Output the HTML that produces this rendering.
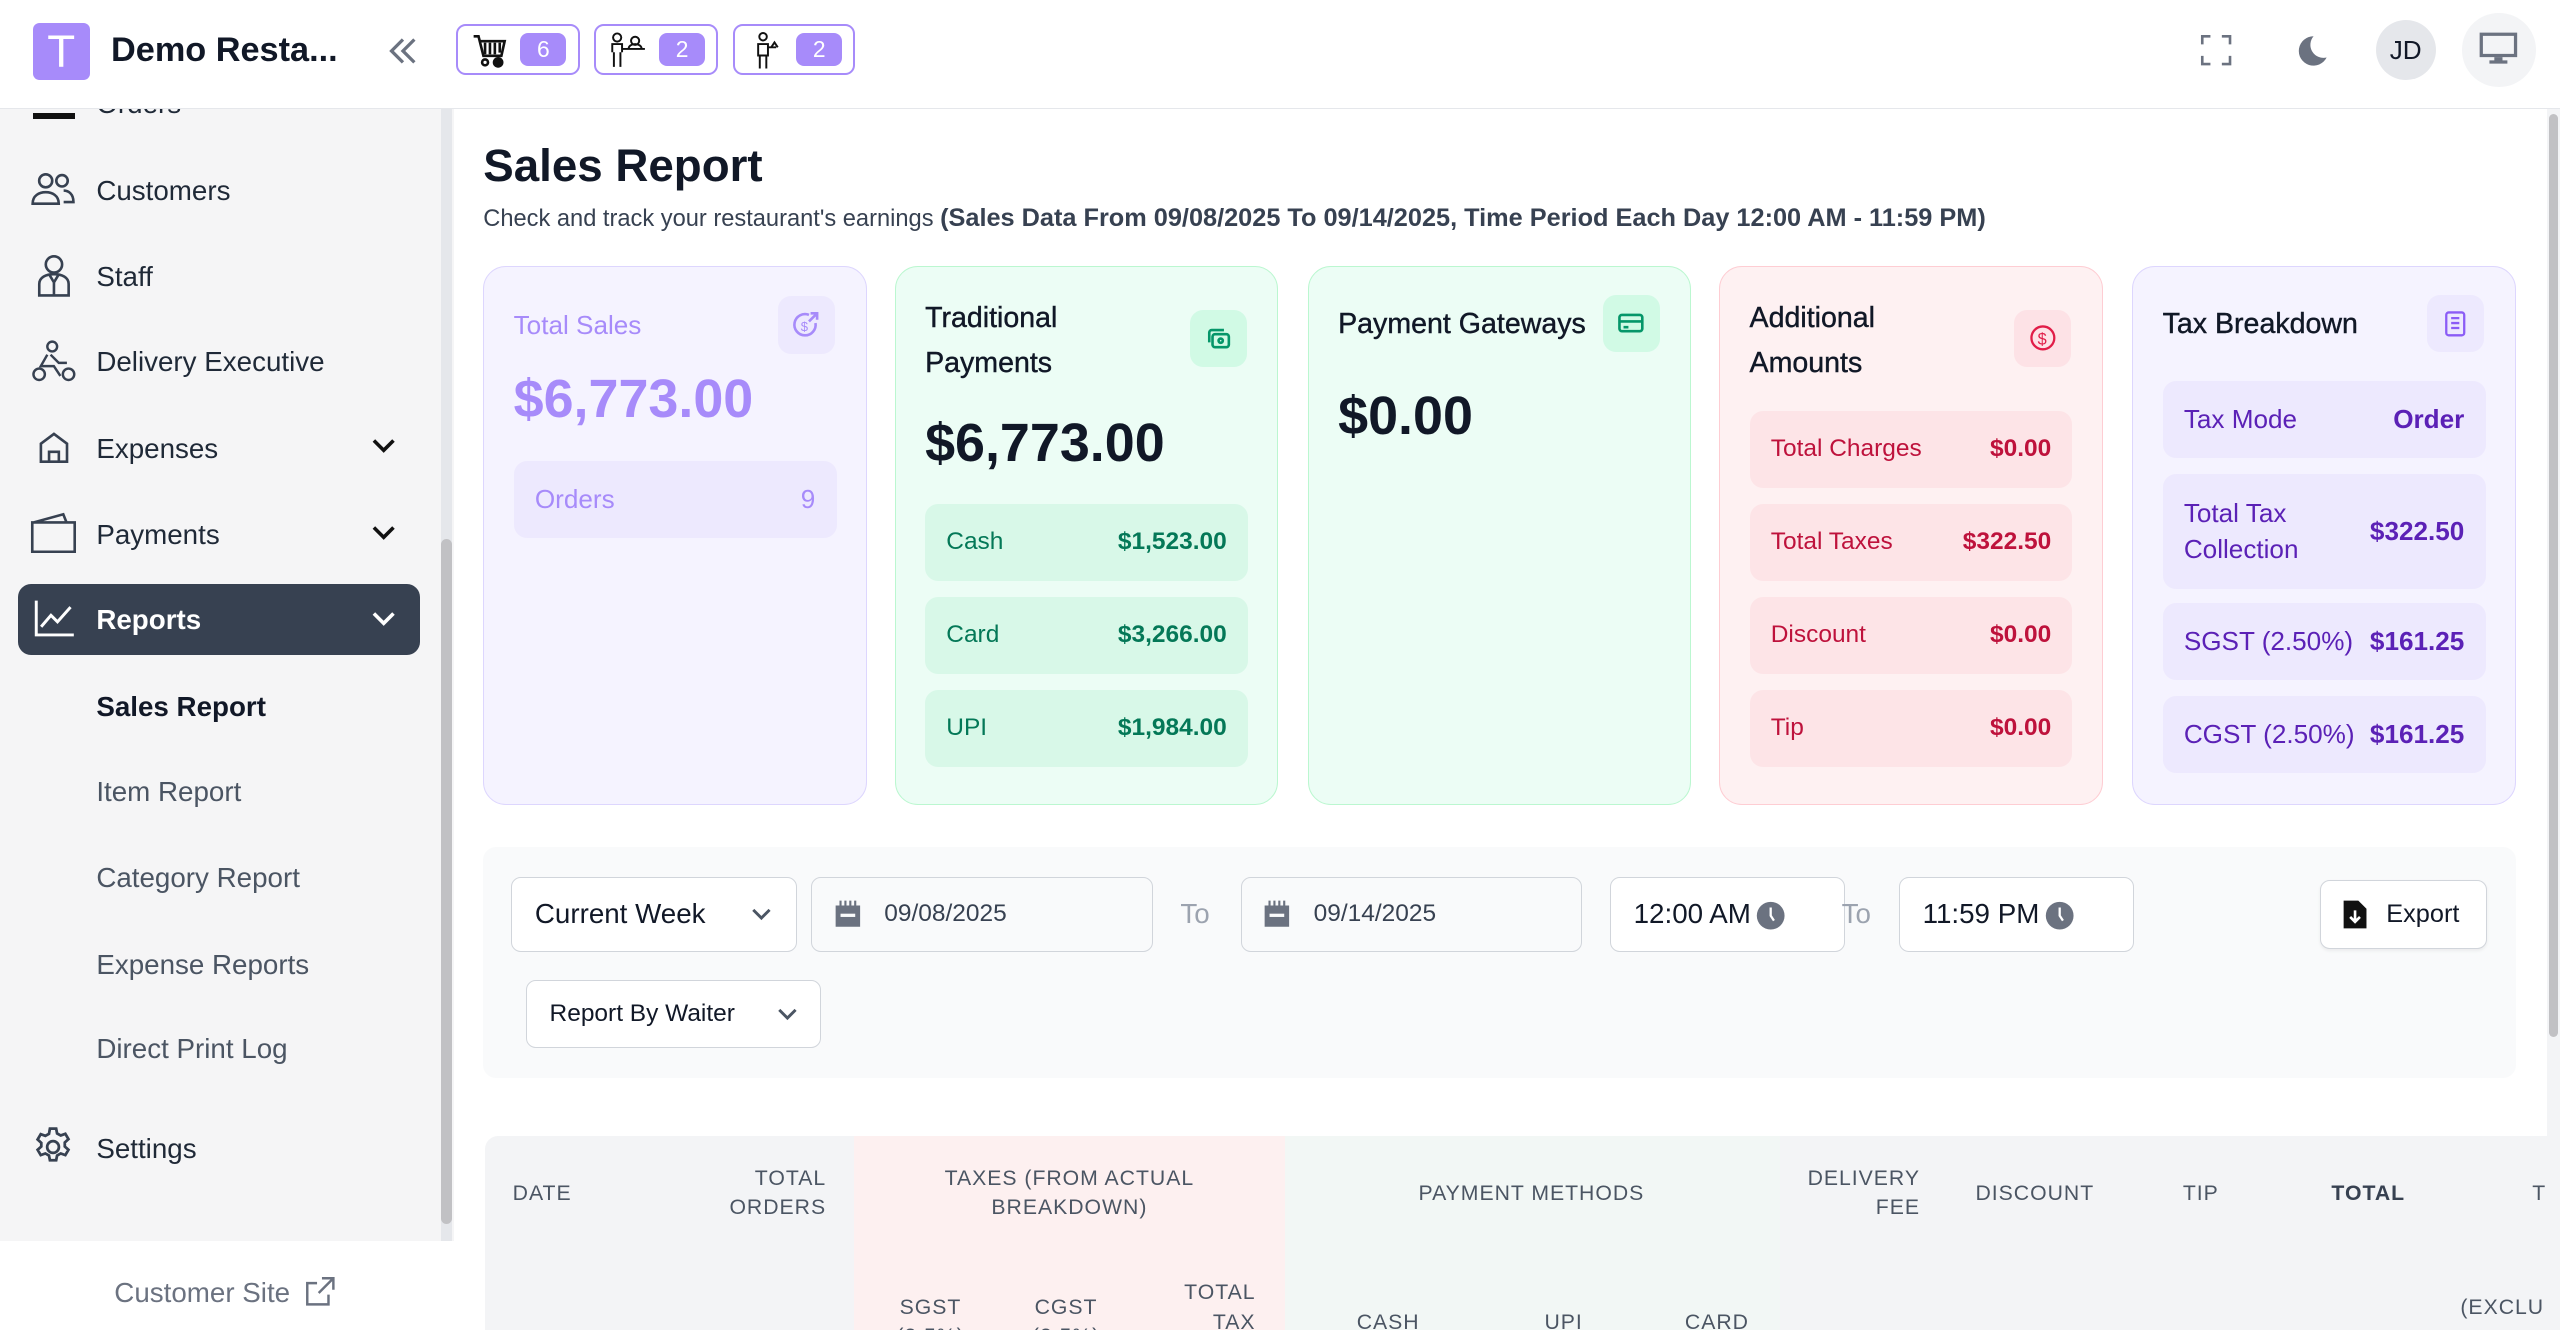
<!DOCTYPE html>
<html><head><meta charset="utf-8"><style>
*{box-sizing:border-box;margin:0;padding:0}
html,body{width:2560px;height:1330px;overflow:hidden;background:#fff}
#r{position:relative;width:1568px;height:815px;zoom:1.63265;font-family:"Liberation Sans",sans-serif;color:#111827;overflow:hidden}
.a{position:absolute}
.hb{position:absolute;top:15px;height:31px;border:1.5px solid #a78bfa;border-radius:6px;z-index:6}
.bd{position:absolute;top:4px;right:7px;width:28px;height:20px;background:#a78bfa;color:#fff;border-radius:5px;font-size:14px;text-align:center;line-height:20px}
.nav{position:absolute;left:59px;font-size:17px;color:#1f2937}
.sub{position:absolute;left:59px;font-size:17px;color:#4b5563}
.card{position:absolute;top:163px;height:330px;width:235px;border-radius:14px;border:1px solid}
.row{position:absolute;left:18px;right:18px;height:47px;border-radius:8px;font-size:15px;display:flex;justify-content:space-between;align-items:center;padding:0 13px}
.ic{position:absolute;width:35px;height:35px;border-radius:8px}
.inp{position:absolute;top:537px;height:46px;border:1px solid #d1d5db;border-radius:6px;background:#fff;font-size:17px;display:flex;align-items:center}
.th{position:absolute;font-size:13px;color:#4b5563;letter-spacing:.6px;text-align:center;line-height:18px}
.z{z-index:6}
.ct{font-size:17.5px;color:#111827;-webkit-text-stroke:0.25px #111827}
</style></head><body><div id="r">
<!-- sidebar -->
<div class="a" style="left:0;top:50px;width:278px;height:710px;background:#f5f5f6"></div>
<div class="a" style="left:270px;top:67px;width:7px;height:693px;background:#e5e7eb"></div>
<div class="a" style="left:270px;top:330px;width:7px;height:420px;background:#c1c1c4;border-radius:4px"></div>
<div class="a" style="left:0;top:760px;width:278px;height:55px;background:#fff"></div>
<div class="a" style="left:20px;top:58px;width:26px;height:15px;border-bottom:4px solid #111;border-top:3px solid #111"></div>
<div class="nav" style="top:54px">Orders</div>
<!-- header -->
<div class="a z" style="left:0;top:0;width:1568px;height:67px;border-bottom:1px solid #e5e7eb;background:#fff"></div>
<div class="a z" style="left:20px;top:14px;width:35px;height:35px;background:#a78bfa;border-radius:4px;color:#fff;font-size:28px;text-align:center;line-height:35px">T</div>
<div class="a z" style="left:68px;top:19px;font-size:21px;font-weight:bold">Demo Resta...</div>
<svg class="a z" style="left:236px;top:20px" width="22" height="22" viewBox="0 0 22 22" fill="none" stroke="#6b7280" stroke-width="2"><path d="M11 4 4 11l7 7M18 4l-7 7 7 7"/></svg>
<div class="hb" style="left:279px;width:76px"><svg class="a" style="left:9px;top:4px" width="22" height="22" viewBox="0 0 22 22" fill="none" stroke="#111" stroke-width="1.6"><path d="M1 2h3l3 12h11l2-9H5"/><path d="M8 6v7M11 6v7M14 6v7M17 6v6"/><circle cx="8" cy="18" r="1.8"/><circle cx="16" cy="18" r="2.5" fill="#111"/></svg><div class="bd">6</div></div>
<div class="hb" style="left:364px;width:76px"><svg class="a" style="left:8px;top:3px" width="24" height="24" viewBox="0 0 24 24" fill="none" stroke="#111" stroke-width="1.2"><circle cx="5" cy="4" r="2.5"/><path d="M2 13V8h6v5M3 13v9M7 13v9M8 11h14"/><circle cx="16" cy="6" r="2.5"/><path d="M12 11c0-2 2-3 4-3s4 1 4 3"/></svg><div class="bd">2</div></div>
<div class="hb" style="left:449px;width:75px"><svg class="a" style="left:9px;top:3px" width="22" height="24" viewBox="0 0 22 24" fill="none" stroke="#111" stroke-width="1.2"><circle cx="8" cy="3.5" r="2.3"/><path d="M5 8h6v7H5zM6 15v8M10 15v8M11 10h5M13 10l2-3 2 3"/></svg><div class="bd">2</div></div>
<svg class="a z" style="left:1347px;top:20px" width="21" height="21" viewBox="0 0 21 21" fill="none" stroke="#6b7280" stroke-width="1.6"><path d="M2 7V2h5M14 2h5v5M19 14v5h-5M7 19H2v-5"/></svg>
<svg class="a z" style="left:1405px;top:20px" width="22" height="22" viewBox="0 0 22 22"><path d="M12 2a9 9 0 1 0 8 13A8 8 0 0 1 12 2z" fill="#6b7280"/></svg>
<div class="a z" style="left:1455px;top:12px;width:37px;height:37px;border-radius:50%;background:#e5e7eb;font-size:16px;text-align:center;line-height:37px">JD</div>
<div class="a z" style="left:1508px;top:8px;width:45px;height:45px;border-radius:50%;background:#f3f4f6"></div>
<svg class="a z" style="left:1518px;top:19px" width="25" height="22" viewBox="0 0 25 22" fill="#6b7280"><path d="M1 1h23v15H1zM3 3v11h19V3z"/><path d="M10 16h5v2h3v2H7v-2h3z"/></svg>
<!-- sidebar items -->
<svg class="a" style="left:19px;top:105px" width="27" height="22" viewBox="0 0 27 22" fill="none" stroke="#374151" stroke-width="1.6"><circle cx="9" cy="6" r="4"/><path d="M1 20c0-5 4-7 8-7s8 2 8 7z"/><circle cx="19" cy="6" r="3.5"/><path d="M20 12c3 0 6 2 6 7h-6"/></svg>
<div class="nav" style="top:107px">Customers</div>
<svg class="a" style="left:22px;top:155px" width="22" height="27" viewBox="0 0 22 27" fill="none" stroke="#374151" stroke-width="1.6"><circle cx="11" cy="7" r="5"/><path d="M2 26V19c0-4 4-6 9-6s9 2 9 6v7zM8 13l3 5 3-5M11 18v8"/></svg>
<div class="nav" style="top:160px">Staff</div>
<svg class="a" style="left:19px;top:208px" width="28" height="26" viewBox="0 0 28 26" fill="none" stroke="#374151" stroke-width="1.5"><circle cx="13" cy="4" r="3"/><path d="M10 9l-4 7h8l4 6M12 9l5 5h5"/><circle cx="5" cy="21" r="3.5"/><circle cx="23" cy="21" r="3.5"/></svg>
<div class="nav" style="top:212px">Delivery Executive</div>
<svg class="a" style="left:22px;top:263px" width="22" height="22" viewBox="0 0 22 22" fill="none" stroke="#374151" stroke-width="1.6"><path d="M3 9l8-6 8 6v11H3zM8 20v-6h6v6"/></svg>
<div class="nav" style="top:265px">Expenses</div>
<svg class="a" style="left:226px;top:266px" width="18" height="14" viewBox="0 0 18 14" fill="none" stroke="#111" stroke-width="2.2"><path d="M3 4l6 6 6-6"/></svg>
<svg class="a" style="left:18px;top:313px" width="30" height="26" viewBox="0 0 30 26" fill="none" stroke="#374151" stroke-width="1.6"><path d="M2 7h26v18H2zM3 7l18-5 2 5"/></svg>
<div class="nav" style="top:318px">Payments</div>
<svg class="a" style="left:226px;top:319px" width="18" height="14" viewBox="0 0 18 14" fill="none" stroke="#111" stroke-width="2.2"><path d="M3 4l6 6 6-6"/></svg>
<div class="a" style="left:11px;top:358px;width:246px;height:43px;background:#374151;border-radius:8px"></div>
<svg class="a" style="left:20px;top:367px" width="26" height="24" viewBox="0 0 26 24" fill="none" stroke="#fff" stroke-width="1.8"><path d="M2 1v21h23M5 17l6-7 4 4 8-9"/></svg>
<div class="nav" style="top:370px;color:#fff;font-weight:bold">Reports</div>
<svg class="a" style="left:226px;top:372px" width="18" height="14" viewBox="0 0 18 14" fill="none" stroke="#fff" stroke-width="2.2"><path d="M3 4l6 6 6-6"/></svg>
<div class="sub" style="top:423px;color:#111827;font-weight:bold">Sales Report</div>
<div class="sub" style="top:475px">Item Report</div>
<div class="sub" style="top:528px">Category Report</div>
<div class="sub" style="top:581px">Expense Reports</div>
<div class="sub" style="top:633px">Direct Print Log</div>
<svg class="a" style="left:19px;top:689px" width="27" height="27" viewBox="0 0 24 24" fill="none" stroke="#374151" stroke-width="1.5"><circle cx="12" cy="12" r="3.2"/><path d="M10.3 2h3.4l.5 2.6 2 1.1 2.5-.9 1.7 2.9-2 1.8v2.2l2 1.8-1.7 2.9-2.5-.9-2 1.1-.5 2.6h-3.4l-.5-2.6-2-1.1-2.5.9-1.7-2.9 2-1.8V9.7l-2-1.8 1.7-2.9 2.5.9 2-1.1z"/></svg>
<div class="nav" style="top:694px">Settings</div>
<div class="a" style="left:70px;top:782px;font-size:17px;color:#6b7280">Customer Site</div>
<svg class="a" style="left:186px;top:781px" width="20" height="20" viewBox="0 0 20 20" fill="none" stroke="#6b7280" stroke-width="1.5"><path d="M11 2h7v7M18 2l-9 9M15 12v6H2V5h6"/></svg>
<!-- main scrollbar -->
<div class="a" style="left:1560px;top:67px;width:8px;height:748px;background:#f3f4f6"></div>
<div class="a" style="left:1561px;top:70px;width:6px;height:565px;background:#c1c1c4;border-radius:3px"></div>
<!-- title -->
<div class="a" style="left:296px;top:86px;font-size:28px;font-weight:bold">Sales Report</div>
<div class="a" style="left:296px;top:125px;font-size:14.5px;color:#374151">Check and track your restaurant's earnings <b style="font-size:15.5px">(Sales Data From 09/08/2025 To 09/14/2025, Time Period Each Day 12:00 AM - 11:59 PM)</b></div>
<!-- cards -->
<div class="card" style="left:296px;background:#f5f3ff;border-color:#ddd6fe">
 <div class="a" style="left:18px;top:26px;font-size:16px;color:#a78bfa">Total Sales</div>
 <div class="ic" style="left:180px;top:18px;background:#ede9fe"></div>
 <svg class="a" style="left:188px;top:26px" width="19" height="19" viewBox="0 0 19 19" fill="none" stroke="#a78bfa" stroke-width="1.6"><path d="M15 8a6.5 6.5 0 1 1-4-5"/><path d="M12 2h4v4M16 2l-5 5"/><text x="6" y="13" font-size="8" fill="#a78bfa" stroke="none" font-family="Liberation Sans">$</text></svg>
 <div class="a" style="left:18px;top:62px;font-size:33px;font-weight:bold;color:#a78bfa">$6,773.00</div>
 <div class="row" style="top:119px;background:#ede9fe;color:#a78bfa;font-size:16px"><span>Orders</span><span>9</span></div>
</div>
<div class="card" style="left:548px;background:#ecfdf5;border-color:#bbf7d0">
 <div class="a ct" style="left:18px;top:18px;line-height:27px">Traditional<br>Payments</div>
 <div class="ic" style="left:180px;top:26px;background:#d1fae5"></div>
 <svg class="a" style="left:190px;top:36px" width="16" height="16" viewBox="0 0 16 16" fill="none" stroke="#059669" stroke-width="1.6"><rect x="4" y="5" width="10" height="8" rx="1.5"/><path d="M2 10V4a1.5 1.5 0 0 1 1.5-1.5H11"/><circle cx="9" cy="9" r="1.3"/></svg>
 <div class="a" style="left:18px;top:89px;font-size:33px;font-weight:bold">$6,773.00</div>
 <div class="row" style="top:145px;background:#d8f8e8;color:#047857"><span>Cash</span><b>$1,523.00</b></div>
 <div class="row" style="top:202px;background:#d8f8e8;color:#047857"><span>Card</span><b>$3,266.00</b></div>
 <div class="row" style="top:259px;background:#d8f8e8;color:#047857"><span>UPI</span><b>$1,984.00</b></div>
</div>
<div class="card" style="left:801px;background:#ecfdf5;border-color:#bbf7d0">
 <div class="a ct" style="left:18px;top:25px">Payment Gateways</div>
 <div class="ic" style="left:180px;top:17px;background:#d1fae5"></div>
 <svg class="a" style="left:189px;top:26px" width="17" height="16" viewBox="0 0 17 16" fill="none" stroke="#059669" stroke-width="1.6"><rect x="1.5" y="3" width="14" height="10" rx="1.5"/><path d="M1.5 7h14M4 10.5h3"/></svg>
 <div class="a" style="left:18px;top:72px;font-size:33px;font-weight:bold">$0.00</div>
</div>
<div class="card" style="left:1053px;background:#fef1f2;border-color:#fecdd3">
 <div class="a ct" style="left:18px;top:18px;line-height:27px">Additional<br>Amounts</div>
 <div class="ic" style="left:180px;top:26px;background:#fde2e6"></div>
 <svg class="a" style="left:189px;top:35px" width="17" height="17" viewBox="0 0 17 17" fill="none" stroke="#e11d48" stroke-width="1.4"><circle cx="8.5" cy="8.5" r="7"/><text x="5.3" y="12.5" font-size="10" fill="#e11d48" stroke="none" font-family="Liberation Sans">$</text></svg>
 <div class="row" style="top:88px;background:#fde4e7;color:#be123c"><span>Total Charges</span><b>$0.00</b></div>
 <div class="row" style="top:145px;background:#fde4e7;color:#be123c"><span>Total Taxes</span><b>$322.50</b></div>
 <div class="row" style="top:202px;background:#fde4e7;color:#be123c"><span>Discount</span><b>$0.00</b></div>
 <div class="row" style="top:259px;background:#fde4e7;color:#be123c"><span>Tip</span><b>$0.00</b></div>
</div>
<div class="card" style="left:1306px;background:#f5f3ff;border-color:#ddd6fe">
 <div class="a ct" style="left:18px;top:25px">Tax Breakdown</div>
 <div class="ic" style="left:180px;top:17px;background:#ede9fe"></div>
 <svg class="a" style="left:190px;top:26px" width="15" height="17" viewBox="0 0 15 17" fill="none" stroke="#8b5cf6" stroke-width="1.4"><rect x="2" y="1.5" width="11" height="14" rx="1.5"/><path d="M5 5h5M5 8h5M5 11h5"/></svg>
 <div class="row" style="top:70px;background:#ede9fe;color:#5b21b6;font-size:16px"><span>Tax Mode</span><b>Order</b></div>
 <div class="row" style="top:127px;height:70px;background:#ede9fe;color:#5b21b6;font-size:16px"><span style="line-height:22px">Total Tax<br>Collection</span><b>$322.50</b></div>
 <div class="row" style="top:206px;background:#ede9fe;color:#5b21b6;font-size:16px"><span>SGST (2.50%)</span><b>$161.25</b></div>
 <div class="row" style="top:263px;background:#ede9fe;color:#5b21b6;font-size:16px"><span>CGST (2.50%)</span><b>$161.25</b></div>
</div>
<!-- filters -->
<div class="a" style="left:296px;top:519px;width:1245px;height:141px;background:#f9fafb;border-radius:8px"></div>
<div class="inp" style="left:313px;width:175px;padding-left:14px">Current Week<svg class="a" style="left:146px;top:17px" width="14" height="12" viewBox="0 0 14 12" fill="none" stroke="#4b5563" stroke-width="1.8"><path d="M2 3l5 5 5-5"/></svg></div>
<div class="inp" style="left:497px;width:209px;background:#f9fafb;padding-left:44px;font-size:15px;color:#374151"><svg class="a" style="left:13px;top:13px" width="17" height="18" viewBox="0 0 17 18" fill="#6b7280"><path d="M1 4h15v13H1z"/><path d="M4 1v4M7 1v4M10 1v4M13 1v4" stroke="#6b7280" stroke-width="1.3"/><rect x="4" y="9" width="9" height="2" fill="#f9fafb"/></svg>09/08/2025</div>
<div class="a" style="left:723px;top:550px;font-size:17px;color:#9ca3af">To</div>
<div class="inp" style="left:760px;width:209px;background:#f9fafb;padding-left:44px;font-size:15px;color:#374151"><svg class="a" style="left:13px;top:13px" width="17" height="18" viewBox="0 0 17 18" fill="#6b7280"><path d="M1 4h15v13H1z"/><path d="M4 1v4M7 1v4M10 1v4M13 1v4" stroke="#6b7280" stroke-width="1.3"/><rect x="4" y="9" width="9" height="2" fill="#f9fafb"/></svg>09/14/2025</div>
<div class="inp" style="left:986px;width:144px;padding-left:14px">12:00 AM<svg class="a" style="left:89px;top:14px" width="18" height="18" viewBox="0 0 18 18"><circle cx="9" cy="9" r="8.5" fill="#6b7280"/><path d="M9 4v5l2 3" stroke="#fff" stroke-width="1.4" fill="none"/></svg></div>
<div class="a" style="left:1128px;top:550px;font-size:17px;color:#9ca3af">To</div>
<div class="inp" style="left:1163px;width:144px;padding-left:14px">11:59 PM<svg class="a" style="left:89px;top:14px" width="18" height="18" viewBox="0 0 18 18"><circle cx="9" cy="9" r="8.5" fill="#6b7280"/><path d="M9 4v5l2 3" stroke="#fff" stroke-width="1.4" fill="none"/></svg></div>
<div class="inp" style="left:1421px;width:102px;height:42px;top:539px;padding-left:40px;font-size:15.5px;box-shadow:0 1px 2px rgba(0,0,0,.06)"><svg class="a" style="left:13px;top:11px" width="16" height="19" viewBox="0 0 16 19"><path d="M1 1h9l5 5v12H1z" fill="#111"/><path d="M8 7v7M5 11l3 3 3-3" stroke="#fff" stroke-width="1.6" fill="none"/></svg>Export</div>
<div class="inp" style="left:322px;top:600px;width:181px;height:42px;padding-left:14px;font-size:15px">Report By Waiter<svg class="a" style="left:153px;top:15px" width="14" height="12" viewBox="0 0 14 12" fill="none" stroke="#4b5563" stroke-width="1.8"><path d="M2 3l5 5 5-5"/></svg></div>
<!-- table header -->
<div class="a" style="left:297px;top:696px;width:1263px;height:119px;background:#f3f4f6;border-radius:8px 0 0 0"></div>
<div class="a" style="left:523px;top:696px;width:264px;height:119px;background:#fdf0f0"></div>
<div class="a" style="left:787px;top:696px;width:303px;height:119px;background:#f2f7f5"></div>
<div class="th" style="left:314px;top:722px">DATE</div>
<div class="th" style="left:436px;top:713px;width:70px;text-align:right">TOTAL<br>ORDERS</div>
<div class="th" style="left:560px;top:713px;width:190px">TAXES (FROM ACTUAL<br>BREAKDOWN)</div>
<div class="th" style="left:838px;top:722px;width:200px">PAYMENT METHODS</div>
<div class="th" style="left:1096px;top:713px;width:80px;text-align:right">DELIVERY<br>FEE</div>
<div class="th" style="left:1210px;top:722px">DISCOUNT</div>
<div class="th" style="left:1337px;top:722px">TIP</div>
<div class="th" style="left:1428px;top:722px;font-weight:bold;color:#374151">TOTAL</div>
<div class="th" style="left:1551px;top:722px">T</div>
<div class="th" style="left:549px;top:792px">SGST<br>(2.5%)</div>
<div class="th" style="left:632px;top:792px">CGST<br>(2.5%)</div>
<div class="th" style="left:719px;top:783px;width:50px;text-align:right">TOTAL<br>TAX</div>
<div class="th" style="left:831px;top:801px">CASH</div>
<div class="th" style="left:946px;top:801px">UPI</div>
<div class="th" style="left:1032px;top:801px">CARD</div>
<div class="th" style="left:1507px;top:792px">(EXCLU</div>
</div></body></html>
